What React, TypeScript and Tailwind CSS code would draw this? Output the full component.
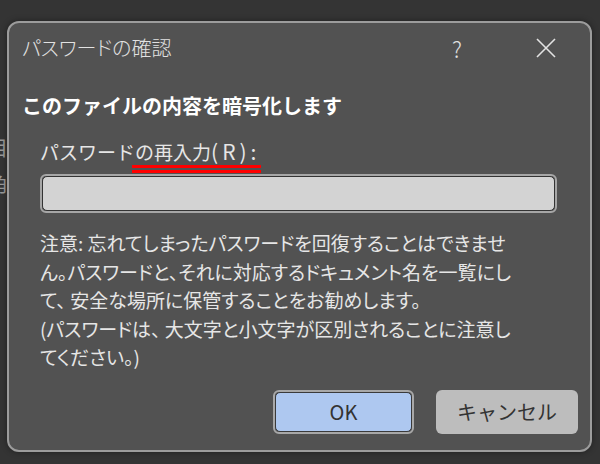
import React from "react";

const font = { fontFamily: '"Noto Sans CJK JP", "Noto Sans", sans-serif' };

export default function App() {
  return (
    <div
      className="relative w-[600px] h-[464px] overflow-hidden bg-[#343434] pt-[21px] pl-[7px]"
      style={font}
    >
      <div className="absolute left-[-12px] top-[136px] flex flex-col gap-[12px] text-[20px] leading-[24px] text-[#9a9a9a]">
        <span>目</span>
        <span>角</span>
      </div>
      <div className="relative flex flex-col w-[585px] h-[431px] rounded-[12px] border-2 border-[#9c9c9c] bg-[#525252] shadow-[0_0_6px_rgba(0,0,0,0.4)]">
        <div className="flex items-center h-[49px] pl-[13px] text-[#e2e2e2]">
          <span className="text-[20px] font-light leading-none [font-feature-settings:'palt']">パスワードの確認</span>
          <span className="ml-auto w-[30px] text-center text-[22px] font-light leading-none">?</span>
          <span className="ml-[59px] mr-[29px] w-[30px] flex justify-center">
            <svg width="20" height="20" viewBox="0 0 20 20" fill="none" stroke="#e2e2e2" strokeWidth="1.6">
              <path d="M1 1 L19 19 M19 1 L1 19" />
            </svg>
          </span>
        </div>
        <div className="mt-[22px] pl-[13px] text-[20px] font-bold leading-[24px] text-white">
          このファイルの内容を暗号化します
        </div>
        <div className="mt-[21px] pl-[31px] text-[19px] leading-[24px] text-[#e6e6e6]">
          パスワード
          <span className="relative">
            の再入力<span className="text-[21px] tracking-[4px]">(R):</span>
            <span className="absolute left-[-3px] right-[-1px] top-[27px] h-[3px] bg-[#ff0000]" />
            <span className="absolute left-[-3px] right-[-1px] top-[32px] h-[3px] bg-[#ff0000]" />
          </span>
        </div>
        <div className="mt-[10px] ml-[31px] w-[517px] h-[39px] rounded-[6px] border-2 border-[#a6a6a6] p-0">
          <div className="w-full h-full rounded-[5px] border border-[#333333] bg-[#d3d3d3]" />
        </div>
        <div className="mt-[16px] pl-[31px] pr-[20px] text-[19px] leading-[28.5px] text-[#e6e6e6] [font-feature-settings:'palt']">
          <div>注意: 忘れてしまったパスワードを回復することはできませ</div>
          <div>ん。パスワードと、それに対応するドキュメント名を一覧にし</div>
          <div>て、 安全な場所に保管することをお勧めします。</div>
          <div>(パスワードは、 大文字と小文字が区別されることに注意し</div>
          <div>てください。)</div>
        </div>
        <div className="mt-auto mb-[16px] flex justify-end gap-[22px] pr-[12px]">
          <div className="w-[141px] h-[44px] rounded-[6px] border-2 border-[#a8a8a8] flex">
            <div className="flex-1 rounded-[5px] border border-[#3a3a3a] bg-[#aec8f0] flex items-center justify-center text-[20px] text-[#333333]">
              OK
            </div>
          </div>
          <div className="w-[142px] h-[44px] rounded-[6px] bg-[#bdbdbd] flex items-center justify-center text-[20px] text-[#333333]">
            キャンセル
          </div>
        </div>
      </div>
    </div>
  );
}
